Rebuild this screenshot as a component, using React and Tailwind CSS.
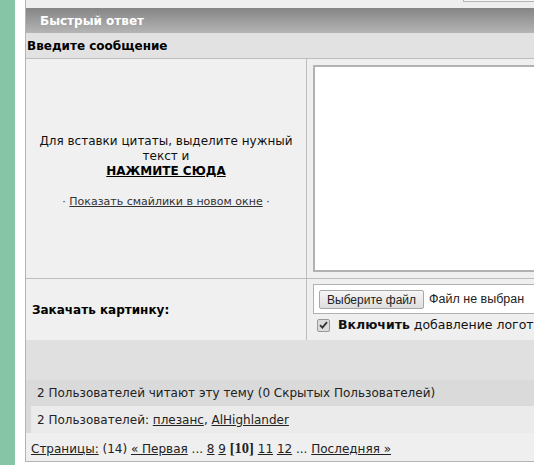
import React from "react";

function FastReply() {
    return (
        <div className="w-[620px] shrink-0 border-l border-b border-[#b4b4b4] bg-[#efefef] flex flex-col">
            <div className="h-[8px] bg-[#eeeeee] relative">
                <div className="absolute left-[437px] top-0 w-[200px] h-[2px] border-l border-b border-[#b4b4b4] bg-[#f6f6f6]" />
            </div>

            <div className="h-[25px] flex items-center px-[14px] bg-linear-to-b from-[#858585] to-[#b5b5b5] text-white font-bold text-[12px]">
                Быстрый ответ
            </div>

            <div className="h-[26px] flex items-center px-[1px] bg-[#e2e2e2] border-b border-[#bdbdbd] font-bold text-[12px] text-black">
                Введите сообщение
            </div>

            <div className="grid grid-cols-[281px_1fr] h-[220px] border-b border-[#bdbdbd]">
                <div className="border-r border-[#bdbdbd] bg-[#f0f0f0] flex flex-col items-center justify-center text-center text-[12px] text-[#111] leading-[15px] pt-[6px]">
                    <p>Для вставки цитаты, выделите нужный<br />текст и</p>
                    <a href="#" className="font-bold underline text-black">НАЖМИТЕ СЮДА</a>
                    <p className="mt-[15px] text-[11px] text-[#333]">
                        · <a href="#" className="underline">Показать смайлики в новом окне</a> ·
                    </p>
                </div>
                <div className="bg-[#efefef] pl-[6px] pt-[6px]">
                    <textarea className="block w-full h-[207px] bg-white border-2 border-[#b2b2b2] resize-none outline-none" />
                </div>
            </div>

            <div className="grid grid-cols-[281px_1fr] h-[61px]">
                <div className="border-r border-[#bdbdbd] bg-[#f0f0f0] flex items-center pl-[6px] pt-[1px] font-bold text-[12px] text-black">
                    Закачать картинку:
                </div>
                <div className="bg-[#efefef] pl-[6px] pt-[5px] overflow-hidden">
                    <div className="h-[30px] border border-[#b2b2b2] bg-white flex items-center pl-[5px] gap-[5px] text-[12px] text-[#222]">
                        <button className="h-[19px] px-[7px] border border-[#a8a8a8] rounded-[2px] bg-linear-to-b from-[#f6f6f6] to-[#dedede] text-[12px] text-[#222] font-['Liberation_Sans',Arial,sans-serif]">
                            Выберите файл
                        </button>
                        <span className="font-['Liberation_Sans',Arial,sans-serif] text-[12.5px]">Файл не выбран</span>
                    </div>
                    <label className="flex items-center gap-[8px] mt-[3px] pl-[4px] text-[12.5px] leading-[16px] text-[#111] whitespace-nowrap">
                        <span className="w-[13px] h-[13px] shrink-0 rounded-[2px] border border-[#999] bg-[#dcdcdc] flex items-center justify-center">
                            <svg width="9" height="8" viewBox="0 0 9 8">
                                <path d="M1 4.2 L3.4 6.6 L8 1.2" fill="none" stroke="#333" strokeWidth="1.8" />
                            </svg>
                        </span>
                        <span><b>Включить</b> добавление логотипа</span>
                    </label>
                </div>
            </div>

            <div className="h-[40px] bg-[#e0e0e0]" />

            <div className="bg-[#dadada] text-[12px] text-[#222]">
                <div className="h-[26px] flex items-center pl-[11px]">
                    2 Пользователей читают эту тему (0 Скрытых Пользователей)
                </div>
                <div className="ml-[5px] h-[27px] bg-[#ebebeb] flex items-center pl-[6px]">
                    2 Пользователей:&nbsp;<a href="#" className="underline text-[#222]">плезанс</a>,&nbsp;<a href="#" className="underline text-[#222]">AlHighlander</a>
                </div>
            </div>

            <div className="h-[28px] bg-[#efefef] flex items-center pl-[5px] pt-[3px] text-[12px] text-[#222] whitespace-nowrap">
                <a href="#" className="underline">Страницы:</a>&nbsp;(14)&nbsp;
                <a href="#" className="underline">« Первая</a>&nbsp;...&nbsp;
                <a href="#" className="underline">8</a>&nbsp;
                <a href="#" className="underline">9</a>&nbsp;
                <b className="font-['Liberation_Serif',serif] text-[14.5px]">[10]</b>&nbsp;
                <a href="#" className="underline">11</a>&nbsp;
                <a href="#" className="underline">12</a>&nbsp;...&nbsp;
                <a href="#" className="underline">Последняя »</a>
            </div>
        </div>
    );
}

export default function App() {
    return (
        <div className="w-[534px] h-[465px] overflow-hidden flex bg-white font-['DejaVu_Sans',Verdana,sans-serif]">
            <div className="w-[15px] shrink-0 bg-[#86c6a6]" />
            <div className="w-[10px] shrink-0 bg-white" />
            <div className="flex flex-col items-start">
                <FastReply />
            </div>
        </div>
    );
}
